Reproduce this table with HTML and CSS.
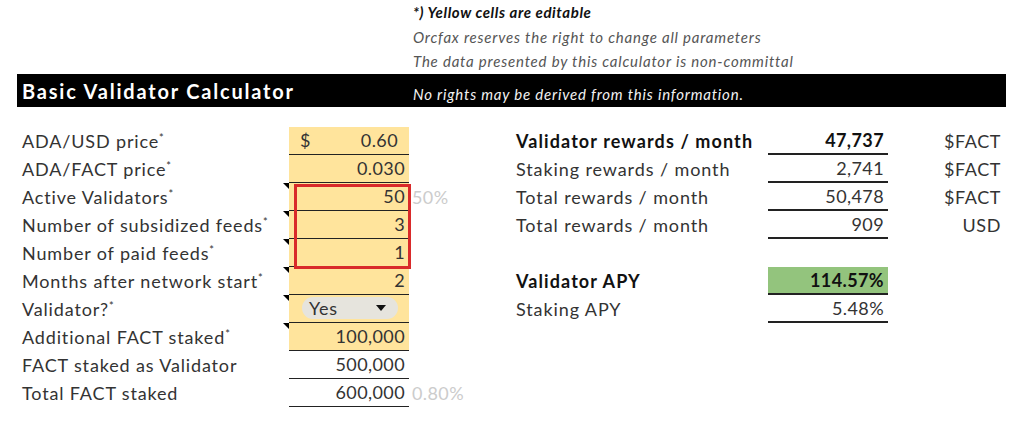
FILE: index.html
```html
<!DOCTYPE html>
<html lang="en">
<head>
<meta charset="utf-8">
<title>Basic Validator Calculator</title>
<link rel="stylesheet" href="styles.css">
</head>
<body>
<div class="page">
  <div class="notes">
    <p class="note note-strong">*) Yellow cells are editable</p>
    <p class="note">Orcfax reserves the right to change all parameters</p>
    <p class="note">The data presented by this calculator is non-committal</p>
  </div>

  <div class="titlebar">
    <h1 class="title">Basic Validator Calculator</h1>
    <p class="note note-inverse">No rights may be derived from this information.</p>
  </div>

  <div class="sheet">
    <div class="inputs">
      <div class="row">
        <div class="label">ADA/USD price<span class="req">*</span></div>
        <div class="value editable accounting"><span>$</span><span>0.60</span></div>
        <div class="pct"></div>
      </div>
      <div class="row">
        <div class="label">ADA/FACT price<span class="req">*</span></div>
        <div class="value editable">0.030</div>
        <div class="pct"></div>
      </div>
      <div class="row">
        <div class="label has-note">Active Validators<span class="req">*</span></div>
        <div class="value editable">50</div>
        <div class="pct">50%</div>
      </div>
      <div class="row">
        <div class="label has-note">Number of subsidized feeds<span class="req">*</span></div>
        <div class="value editable">3</div>
        <div class="pct"></div>
      </div>
      <div class="row">
        <div class="label has-note">Number of paid feeds<span class="req">*</span></div>
        <div class="value editable">1</div>
        <div class="pct"></div>
      </div>
      <div class="row">
        <div class="label has-note">Months after network start<span class="req">*</span></div>
        <div class="value editable">2</div>
        <div class="pct"></div>
      </div>
      <div class="row">
        <div class="label has-note">Validator?<span class="req">*</span></div>
        <div class="value editable select-cell">
          <span class="chip"><span class="chip-text">Yes</span><span class="chip-arrow"></span></span>
        </div>
        <div class="pct"></div>
      </div>
      <div class="row">
        <div class="label has-note">Additional FACT staked<span class="req">*</span></div>
        <div class="value editable">100,000</div>
        <div class="pct"></div>
      </div>
      <div class="row">
        <div class="label">FACT staked as Validator</div>
        <div class="value">500,000</div>
        <div class="pct"></div>
      </div>
      <div class="row">
        <div class="label">Total FACT staked</div>
        <div class="value">600,000</div>
        <div class="pct">0.80%</div>
      </div>
      <div class="selection"></div>
    </div>

    <div class="results">
      <div class="rrow">
        <div class="rlabel bold">Validator rewards / month</div>
        <div class="rvalue bold">47,737</div>
        <div class="unit">$FACT</div>
      </div>
      <div class="rrow">
        <div class="rlabel">Staking rewards / month</div>
        <div class="rvalue">2,741</div>
        <div class="unit">$FACT</div>
      </div>
      <div class="rrow">
        <div class="rlabel">Total rewards / month</div>
        <div class="rvalue">50,478</div>
        <div class="unit">$FACT</div>
      </div>
      <div class="rrow">
        <div class="rlabel">Total rewards / month</div>
        <div class="rvalue">909</div>
        <div class="unit">USD</div>
      </div>
      <div class="rrow rrow-empty"></div>
      <div class="rrow">
        <div class="rlabel bold">Validator APY</div>
        <div class="rvalue bold highlight">114.57%</div>
        <div class="unit"></div>
      </div>
      <div class="rrow">
        <div class="rlabel">Staking APY</div>
        <div class="rvalue">5.48%</div>
        <div class="unit"></div>
      </div>
    </div>
  </div>
</div>
</body>
</html>
```

FILE: styles.css
```css
* { box-sizing: border-box; }

html, body {
  margin: 0;
  padding: 0;
  background: #ffffff;
}

body {
  font-family: "Lato", "Open Sans", sans-serif;
  color: #333333;
  width: 1024px;
  height: 430px;
  overflow: hidden;
}

.notes {
  padding-left: 413px;
}

.note {
  margin: 0;
  font-style: italic;
  font-size: 15px;
  line-height: 24.5px;
  letter-spacing: 0.8px;
  color: #555555;
}

.note-strong {
  font-weight: 700;
  letter-spacing: 0.6px;
  color: #111111;
}

.titlebar {
  margin-left: 17px;
  width: 989px;
  height: 33px;
  background: #000000;
  display: flex;
  align-items: center;
  padding-left: 5px;
}

.title {
  margin: 0;
  width: 391px;
  font-size: 20px;
  font-weight: 700;
  letter-spacing: 1.8px;
  color: #ffffff;
  line-height: 33px;
  padding-top: 3px;
}

.note-inverse {
  color: #f2f2f2;
  padding-top: 9px;
}

.sheet {
  display: flex;
  margin-top: 20px;
  padding-left: 17px;
}

.inputs {
  position: relative;
  width: 494px;
}

.row {
  display: grid;
  grid-template-columns: 272px 120px 102px;
  height: 28px;
}

.label {
  position: relative;
  padding-left: 5px;
  font-size: 18px;
  line-height: 28px;
  letter-spacing: 0.85px;
  color: #333333;
  white-space: nowrap;
}

.req {
  position: relative;
  top: -6px;
  font-size: 11px;
  line-height: 0;
  letter-spacing: 0;
}

.has-note::after {
  content: "";
  position: absolute;
  top: 0;
  right: 0;
  width: 0;
  height: 0;
  border-top: 6px solid #000000;
  border-left: 6px solid transparent;
}

.value {
  font-size: 18px;
  line-height: 27px;
  letter-spacing: 0.4px;
  text-align: right;
  padding-right: 4px;
  border-bottom: 1px solid #222222;
  color: #333333;
}

.editable {
  background: #ffe49c;
}

.accounting {
  display: flex;
  justify-content: space-between;
  padding-left: 11px;
  padding-right: 11px;
}

.select-cell {
  display: flex;
  align-items: center;
  padding-left: 13px;
  padding-right: 11px;
}

.chip {
  display: flex;
  align-items: center;
  justify-content: space-between;
  width: 96px;
  height: 22px;
  border-radius: 11px;
  background: #e6e4dd;
  padding: 0 12px 0 7px;
  font-size: 18px;
  line-height: 22px;
  letter-spacing: 0.8px;
  color: #333333;
}

.chip-arrow {
  width: 0;
  height: 0;
  border-left: 5px solid transparent;
  border-right: 5px solid transparent;
  border-top: 6px solid #111111;
}

.pct {
  font-size: 18px;
  line-height: 28px;
  letter-spacing: 0.4px;
  padding-left: 3px;
  color: #cccccc;
}

.selection {
  position: absolute;
  left: 277px;
  top: 57px;
  width: 117px;
  height: 85px;
  border: 3px solid #d92a2a;
  pointer-events: none;
}

.results {
  width: 495px;
}

.rrow {
  display: grid;
  grid-template-columns: 257px 120px 118px;
  height: 28px;
}

.rlabel {
  padding-left: 5px;
  font-size: 18px;
  line-height: 28px;
  letter-spacing: 0.9px;
  color: #333333;
  white-space: nowrap;
}

.rvalue {
  font-size: 18px;
  line-height: 26px;
  letter-spacing: 0.4px;
  text-align: right;
  padding-right: 4px;
  border-bottom: 2px solid #222222;
  color: #333333;
}

.rlabel.bold {
  letter-spacing: 1.1px;
}

.bold {
  font-weight: 700;
  color: #111111;
}

.highlight {
  background: #93c47d;
}

.unit {
  font-size: 18px;
  line-height: 28px;
  letter-spacing: 0.6px;
  text-align: right;
  padding-right: 5px;
  color: #333333;
}
```
